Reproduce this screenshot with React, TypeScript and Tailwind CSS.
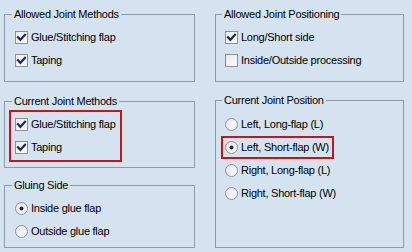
import React from "react";

const font = { fontFamily: '"Liberation Sans", Arial, sans-serif' };

function CheckBox({ checked }: { checked: boolean }) {
  return (
    <svg width="13" height="13" viewBox="0 0 13 13" className="shrink-0">
      <defs>
        <linearGradient id="cbg" x1="0" y1="0" x2="1" y2="1">
          <stop offset="0" stopColor="#e6e9ee" />
          <stop offset="1" stopColor="#fbfcfd" />
        </linearGradient>
      </defs>
      <rect x="0.5" y="0.5" width="12" height="12" fill="url(#cbg)" stroke="#8e8f90" />
      {checked && (
        <path d="M3 6.3 L5.4 8.8 L10 3.8" fill="none" stroke="#1e2d4d" strokeWidth="2.2" strokeLinecap="square" />
      )}
    </svg>
  );
}

function Radio({ checked }: { checked: boolean }) {
  return (
    <svg width="13" height="13" viewBox="0 0 13 13" className="shrink-0">
      <defs>
        <linearGradient id="rbg" x1="0" y1="0" x2="1" y2="1">
          <stop offset="0" stopColor="#e4e7ec" />
          <stop offset="1" stopColor="#fbfcfd" />
        </linearGradient>
      </defs>
      <circle cx="6.5" cy="6.5" r="6" fill="url(#rbg)" stroke="#8e8f90" />
      {checked && <circle cx="6.5" cy="6.5" r="2" fill="#1e2a45" />}
    </svg>
  );
}

function Row({ kind, checked, label }: { kind: "check" | "radio"; checked: boolean; label: string }) {
  return (
    <div className="flex h-[23px] items-center gap-[3px] whitespace-nowrap">
      {kind === "check" ? <CheckBox checked={checked} /> : <Radio checked={checked} />}
      <span>{label}</span>
    </div>
  );
}

function Group({ title, className, children }: { title: string; className: string; children: React.ReactNode }) {
  return (
    <fieldset className={`border border-[#8c9aab] ${className}`}>
      <legend className="-ml-[3px] px-[2px] leading-[13px]">{title}</legend>
      {children}
    </fieldset>
  );
}

export default function App() {
  return (
    <div
      className="grid h-[252px] w-[412px] grid-cols-[191px_189px] gap-x-[20px] bg-[#d5e3f1] pl-[4px] pt-[8px] text-[11px] tracking-[-0.25px] text-black"
      style={font}
    >
      <div className="flex flex-col">
        <Group title="Allowed Joint Methods" className="h-[74px] px-[10px] pt-[5px]">
          <Row kind="check" checked label="Glue/Stitching flap" />
          <Row kind="check" checked label="Taping" />
        </Group>

        <Group title="Current Joint Methods" className="mt-[13px] h-[73px] px-[10px] pt-[2px]">
          <div className="-ml-[6px] w-[113px] border-2 border-[#c4141c] py-[1px] pl-[4px]">
            <Row kind="check" checked label="Glue/Stitching flap" />
            <Row kind="check" checked label="Taping" />
          </div>
        </Group>

        <Group title="Gluing Side" className="mt-[11px] h-[69px] px-[10px] pt-[5px]">
          <Row kind="radio" checked label="Inside glue flap" />
          <Row kind="radio" checked={false} label="Outside glue flap" />
        </Group>
      </div>

      <div className="flex flex-col">
        <Group title="Allowed Joint Positioning" className="h-[74px] px-[9px] pt-[5px]">
          <Row kind="check" checked label="Long/Short side" />
          <Row kind="check" checked={false} label="Inside/Outside processing" />
        </Group>

        <Group title="Current Joint Position" className="mt-[12px] h-[154px] px-[9px] pt-[6px]">
          <Row kind="radio" checked={false} label="Left, Long-flap (L)" />
          <div className="-ml-[4px] w-[113px] border-2 border-[#c4141c] pl-[2px] [&>div]:h-[19px]">
            <Row kind="radio" checked label="Left, Short-flap (W)" />
          </div>
          <Row kind="radio" checked={false} label="Right, Long-flap (L)" />
          <Row kind="radio" checked={false} label="Right, Short-flap (W)" />
        </Group>
      </div>
    </div>
  );
}
